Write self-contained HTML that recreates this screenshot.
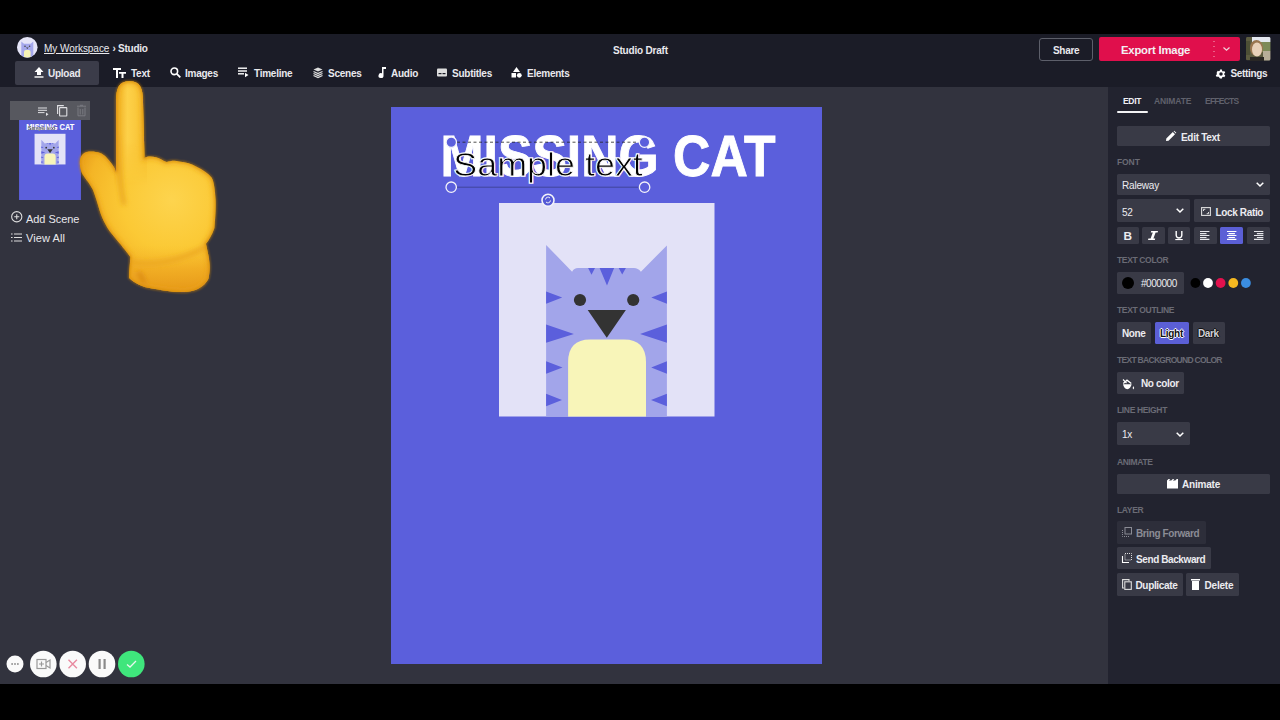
<!DOCTYPE html>
<html><head><meta charset="utf-8">
<style>
*{box-sizing:border-box;margin:0;padding:0}
html,body{width:1280px;height:720px;overflow:hidden;background:#000;font-family:"Liberation Sans",sans-serif;color:#fff}
.a{position:absolute}
#hdr{position:absolute;left:0;top:34px;width:1280px;height:53px;background:#1b1c27}
#main{position:absolute;left:0;top:87px;width:1108px;height:597px;background:#32333e}
#rp{position:absolute;left:1108px;top:87px;width:172px;height:597px;background:#22232f}
.t{position:absolute;white-space:nowrap;line-height:1}
.nav{font-size:10px;font-weight:bold;color:#e9e9ee;letter-spacing:-0.25px}
.btn{position:absolute;background:#393a46;border-radius:1.5px}
.lbl{position:absolute;font-size:8.5px;font-weight:bold;color:#6a6b75;white-space:nowrap;line-height:1;letter-spacing:-0.1px}
.bt{position:absolute;font-size:10px;font-weight:bold;color:#ececf0;white-space:nowrap;line-height:1;letter-spacing:-0.2px}
svg{position:absolute;overflow:visible}
</style></head><body>
<div id="hdr"></div>
<div id="main"></div>
<div id="rp"></div>

<!-- header row 1 -->
<svg style="left:16.7px;top:36.8px" width="20.6" height="20.6" viewBox="0 0 20.6 20.6"><defs><clipPath id="avc"><circle cx="10.3" cy="10.3" r="10.3"/></clipPath></defs>
  <circle cx="10.3" cy="10.3" r="10.3" fill="#e6e5f8"/>
  <g clip-path="url(#avc)">
  <path d="M4.3 4.5 L7 6.8 L13.6 6.8 L16.3 4.5 L16.3 21 L4.3 21 Z" fill="#a5a8ec"/>
  <circle cx="8" cy="9.3" r="0.8" fill="#444"/><circle cx="12.6" cy="9.3" r="0.8" fill="#444"/>
  <path d="M9 10.5 H11.6 L10.3 12Z" fill="#444"/>
  <path d="M7 21 V15 Q7 13 9 13 H11.6 Q13.6 13 13.6 15 V21Z" fill="#f6f3b6"/>
  </g>
</svg>
<div class="t nav" style="left:44px;top:43.5px;font-weight:normal;text-decoration:underline;font-size:10px;letter-spacing:-0.05px">My Workspace</div>
<div class="t nav" style="left:112.5px;top:43.5px">› Studio</div>
<div class="t nav" style="left:613px;top:45.5px;letter-spacing:-0.2px">Studio Draft</div>

<div class="a" style="left:1039px;top:38px;width:54px;height:23px;border:1px solid #5d5f6a;border-radius:3px"></div>
<div class="t nav" style="left:1053px;top:46px;font-size:10px;letter-spacing:-0.3px">Share</div>
<div class="a" style="left:1099px;top:37px;width:141px;height:24px;background:#e00f4c;border-radius:2px"></div>
<svg style="left:1213px;top:40px" width="2" height="20" viewBox="0 0 2 20"><path d="M1 1 V20" stroke="#f5b0c2" stroke-width="1" stroke-dasharray="1 4"/></svg>
<div class="t" style="left:1121px;top:44.5px;font-size:11.3px;font-weight:bold;color:#f3f0f3;letter-spacing:-0.2px">Export Image</div>
<svg style="left:1223px;top:47px" width="7" height="4" viewBox="0 0 7 4"><path d="M0.5 0.5 L3.5 3.3 L6.5 0.5" stroke="#f2d0da" stroke-width="1.2" fill="none"/></svg>
<svg style="left:1245.8px;top:36.8px" width="24.4" height="23.4" viewBox="0 0 24.4 23.4"><defs><filter id="pb"><feGaussianBlur stdDeviation="0.7"/></filter><clipPath id="pc"><rect x="0" y="0" width="24.4" height="23.4" rx="1.5"/></clipPath></defs>
<g clip-path="url(#pc)"><rect x="0" y="0" width="24.4" height="23.4" fill="#5d5c40"/><g filter="url(#pb)">
<rect x="6" y="-2" width="20" height="7" fill="#e4e8f0"/>
<rect x="15" y="5" width="11" height="10" fill="#7d8a58"/>
<rect x="-2" y="4" width="6" height="14" fill="#4e5035"/>
<rect x="17" y="14" width="8" height="10" fill="#b8ae98"/>
<ellipse cx="10.5" cy="11" rx="6.5" ry="8" fill="#9a7650"/>
<ellipse cx="11" cy="12.5" rx="5" ry="7" fill="#e8d0b8"/>
<rect x="4" y="20" width="14" height="6" fill="#2c2622"/>
</g></g></svg>

<!-- header row 2 -->
<div class="a" style="left:15px;top:61px;width:84px;height:24px;background:#3b3c49;border-radius:2px"></div>
<svg style="left:34px;top:67px" width="10" height="11" viewBox="0 0 10 11"><path d="M5 0 L9.5 5 L7 5 L7 8 L3 8 L3 5 L0.5 5 Z" fill="#fff"/><rect x="0.5" y="9.3" width="9" height="1.4" fill="#fff"/></svg>
<div class="t nav" style="left:48px;top:69px">Upload</div>

<svg style="left:113px;top:68px" width="13" height="10" viewBox="0 0 13 10"><path d="M0 0 H8 V2 H5 V10 H3 V2 H0 Z M6 4 H13 V5.8 H10.5 V10 H8.5 V5.8 H6 Z" fill="#fff"/></svg>
<div class="t nav" style="left:131px;top:69px">Text</div>

<svg style="left:170px;top:67px" width="11" height="11" viewBox="0 0 11 11"><circle cx="4.3" cy="4.3" r="3.3" stroke="#fff" stroke-width="1.6" fill="none"/><path d="M6.8 6.8 L10.3 10.3" stroke="#fff" stroke-width="1.8"/></svg>
<div class="t nav" style="left:185px;top:69px">Images</div>

<svg style="left:238px;top:67px" width="11" height="11" viewBox="0 0 11 11"><rect x="0" y="0.5" width="9" height="1.4" fill="#fff"/><rect x="0" y="3.3" width="9" height="1.4" fill="#fff"/><rect x="0" y="6.1" width="6" height="1.4" fill="#fff"/><path d="M7 5.8 L10.5 8 L7 10.2Z" fill="#fff"/></svg>
<div class="t nav" style="left:254px;top:69px">Timeline</div>

<svg style="left:313px;top:67px" width="10" height="11" viewBox="0 0 10 11"><path d="M5 0.5 L9.5 2.5 L5 4.5 L0.5 2.5Z" fill="#ddd"/><path d="M0.5 4.5 L5 6.5 L9.5 4.5 M0.5 6.5 L5 8.5 L9.5 6.5 M0.5 8.5 L5 10.5 L9.5 8.5" stroke="#ddd" stroke-width="1.3" fill="none"/></svg>
<div class="t nav" style="left:328px;top:69px">Scenes</div>

<svg style="left:378px;top:67px" width="8" height="11" viewBox="0 0 8 11"><path d="M4 0 H8 V2 H5.5 V8.5 A2.5 2.5 0 1 1 4 6.3 Z" fill="#fff"/></svg>
<div class="t nav" style="left:391px;top:69px">Audio</div>

<svg style="left:437px;top:68px" width="10" height="9" viewBox="0 0 10 9"><rect x="0" y="0.5" width="10" height="8" rx="1" fill="#ddd"/><rect x="1.5" y="5" width="3" height="1.2" fill="#1b1c27"/><rect x="5.5" y="5" width="3" height="1.2" fill="#1b1c27"/></svg>
<div class="t nav" style="left:452px;top:69px">Subtitles</div>

<svg style="left:511px;top:67px" width="11" height="11" viewBox="0 0 11 11"><path d="M5.5 0 L9 5 L2 5Z" fill="#fff"/><rect x="0.5" y="6" width="4.5" height="4.5" fill="#fff"/><circle cx="8.3" cy="8.3" r="2.4" fill="#fff"/></svg>
<div class="t nav" style="left:527px;top:69px">Elements</div>

<svg style="left:1214.5px;top:67.5px" width="12" height="12" viewBox="0 0 24 24"><path fill="#fff" d="M19.4 13a7.5 7.5 0 0 0 0-2l2.1-1.6-2-3.5-2.5 1a7.6 7.6 0 0 0-1.7-1L15 3h-4l-.4 2.6a7.6 7.6 0 0 0-1.7 1l-2.5-1-2 3.5L4.6 11a7.5 7.5 0 0 0 0 2l-2.1 1.6 2 3.5 2.5-1a7.6 7.6 0 0 0 1.7 1L11 21h4l.4-2.6a7.6 7.6 0 0 0 1.7-1l2.5 1 2-3.5zM13 15.5a3.5 3.5 0 1 1 0-7 3.5 3.5 0 0 1 0 7z" transform="translate(-1 0)"/></svg>
<div class="t nav" style="left:1230.5px;top:69px;letter-spacing:-0.35px">Settings</div>

<!-- scene panel -->
<div class="a" style="left:10px;top:101px;width:80px;height:19px;background:#57585f"></div>
<svg style="left:38px;top:106.5px" width="11" height="10" viewBox="0 0 11 10"><rect x="0" y="0.5" width="9" height="1" fill="#e0e0e4"/><rect x="0" y="2.8" width="9" height="1" fill="#e0e0e4"/><rect x="0" y="5.1" width="6.5" height="1" fill="#e0e0e4"/><path d="M8 5.5 L10.5 7.3 L8 9.1Z" fill="#e0e0e4"/></svg>
<svg style="left:57px;top:105px" width="11" height="12" viewBox="0 0 11 12"><path d="M0.6 9 V0.6 H6.8" stroke="#e0e0e4" stroke-width="1.1" fill="none"/><rect x="2.6" y="2.6" width="7.2" height="8.4" rx="0.5" stroke="#e0e0e4" stroke-width="1.1" fill="none"/></svg>
<svg style="left:76.5px;top:105px" width="9" height="12" viewBox="0 0 9 12"><path d="M0 1.2 H9 M3 0.3 H6 M1 2.5 V10.8 H8 V2.5 M3.2 4 V9.5 M5.8 4 V9.5" stroke="#7a7b82" stroke-width="1" fill="none"/></svg>

<svg style="left:19px;top:120px" width="62" height="80" viewBox="391 107 431 557"><use href="#cv"/></svg>

<svg style="left:10.8px;top:210.8px" width="11.5" height="11.5" viewBox="0 0 11.5 11.5"><circle cx="5.75" cy="5.75" r="5.1" stroke="#ddd" stroke-width="1.1" fill="none"/><path d="M5.75 3.2 V8.3 M3.2 5.75 H8.3" stroke="#ddd" stroke-width="1.1"/></svg>
<div class="t" style="left:26px;top:214px;font-size:11px;color:#e8e8ec;letter-spacing:-0.05px">Add Scene</div>
<svg style="left:11px;top:233px" width="11" height="9" viewBox="0 0 11 9"><path d="M0 1 H1.6 M0 4.5 H1.6 M0 8 H1.6 M3 1 H11 M3 4.5 H11 M3 8 H11" stroke="#ddd" stroke-width="1.2"/></svg>
<div class="t" style="left:26px;top:233px;font-size:11px;color:#e8e8ec;letter-spacing:0.1px">View All</div>

<!-- canvas -->
<svg style="left:391px;top:107px" width="431" height="557" viewBox="391 107 431 557">
<defs><g id="cv">
  <rect x="391" y="107" width="431" height="557" fill="#5b5fdc"/>
  <text x="440.5" y="176.2" font-family="Liberation Sans" font-weight="bold" font-size="57.5" fill="#fff" stroke="#fff" stroke-width="0.9" textLength="335" lengthAdjust="spacingAndGlyphs">MISSING CAT</text>
  <rect x="499" y="203" width="215.5" height="213.5" fill="#e3e2f7"/>
  <path d="M546.1 244.9 L572.1 271.7 Q574 268 578 268 L634 268 Q638 268 640.9 271.7 L666.9 245.4 L666.9 416.5 L546.1 416.5 Z" fill="#a2a5ea"/>
  <path d="M588.1 268 L595 268 L591.5 274.7Z M599.6 268 L614.1 268 L607 285.4Z M618.7 268 L625.9 268 L622.2 274.5Z" fill="#5b5fdc"/>
  <path d="M546.1 291.5 L562.2 297.5 L546.1 303.8Z M546.1 324.4 L573.9 334 L546.1 342.7Z M546.1 361.2 L562.5 367.5 L546.1 373.8Z M546.1 393.8 L562 400 L546.1 406.3Z" fill="#5b5fdc"/>
  <path d="M666.9 291.5 L651.3 297.5 L666.9 303.8Z M666.9 324.4 L640.1 334 L666.9 342.7Z M666.9 361.2 L651.2 367.5 L666.9 373.8Z M666.9 393.8 L651 400 L666.9 406.3Z" fill="#5b5fdc"/>
  <circle cx="580" cy="300" r="6.1" fill="#333"/><circle cx="633.2" cy="300" r="6.1" fill="#333"/>
  <path d="M587.7 309.9 L625.9 309.9 L606.8 337.7Z" fill="#333"/>
  <path d="M568.1 416.5 L568.1 362 Q568.1 339.4 590 339.4 L624 339.4 Q646 339.4 646 362 L646 416.5Z" fill="#f8f5b9"/>
  <mask id="smask" maskUnits="userSpaceOnUse" x="391" y="107" width="431" height="557"><text x="453.3" y="175.6" font-family="Liberation Sans" font-size="33" textLength="189.5" lengthAdjust="spacingAndGlyphs" fill="#fff" stroke="#000" stroke-width="0.9">Sample text</text></mask>
  <text x="453.3" y="175.6" font-family="Liberation Sans" font-size="33" textLength="189.5" lengthAdjust="spacingAndGlyphs" fill="#fff" stroke="#fff" stroke-width="1.3">Sample text</text>
  <rect x="440" y="140" width="220" height="55" fill="#000" mask="url(#smask)"/>
</g></defs>
<use href="#cv"/>
<path d="M457 142.2 H638.5" stroke="#222" stroke-width="0.8" stroke-dasharray="3 2.5"/>
<path d="M457 187.2 H638.5" stroke="#3a3c8a" stroke-width="0.8"/>
<g fill="#5b5fdc" stroke="#f4f4fa" stroke-width="1.3">
<circle cx="451.3" cy="142.2" r="5.2"/><circle cx="644.5" cy="142.2" r="5.2"/>
<circle cx="451.2" cy="187.2" r="5.2"/><circle cx="644.6" cy="187.2" r="5.2"/>
<circle cx="548" cy="200.3" r="6" stroke-width="1.6" fill="#5559d6"/>
</g>
<path d="M545.5 199.5 A2.6 2.6 0 0 1 550 198 M550.5 200.5 A2.6 2.6 0 0 1 546 202" stroke="#f4f4fa" stroke-width="1" fill="none"/>
</svg>

<!-- right panel -->
<div class="t" style="left:1123px;top:97px;font-size:8.5px;font-weight:bold;color:#f0f0f3;letter-spacing:-0.3px">EDIT</div>
<div class="t" style="left:1154px;top:97px;font-size:8.5px;font-weight:bold;color:#60616c;letter-spacing:-0.1px">ANIMATE</div>
<div class="t" style="left:1205px;top:97px;font-size:8.5px;font-weight:bold;color:#60616c;letter-spacing:-0.75px">EFFECTS</div>
<div class="a" style="left:1117px;top:110.5px;width:31px;height:2.5px;background:#f3f3f5;border-radius:1px"></div>

<div class="btn" style="left:1117px;top:126px;width:153px;height:20px"></div>
<svg style="left:1166px;top:131px" width="10" height="10" viewBox="0 0 10 10"><path d="M0 10 L0.3 7.5 L6.8 1 L9 3.2 L2.5 9.7Z M7.6 0.2 L8.2 -0.3 L10.3 1.8 L9.8 2.4Z" fill="#fff"/></svg>
<div class="bt" style="left:1181px;top:132.5px;letter-spacing:-0.3px">Edit Text</div>

<div class="lbl" style="left:1117px;top:157.5px">FONT</div>
<div class="btn" style="left:1117px;top:174px;width:153px;height:21px"></div>
<div class="bt" style="left:1122px;top:181px;font-weight:normal;font-size:10px">Raleway</div>
<svg style="left:1256px;top:182px" width="8" height="5" viewBox="0 0 8 5"><path d="M0.7 0.7 L4 4 L7.3 0.7" stroke="#fff" stroke-width="1.5" fill="none"/></svg>

<div class="btn" style="left:1117px;top:199px;width:73px;height:23px"></div>
<div class="bt" style="left:1122px;top:207.5px;font-weight:normal">52</div>
<svg style="left:1176px;top:208px" width="8" height="5" viewBox="0 0 8 5"><path d="M0.7 0.7 L4 4 L7.3 0.7" stroke="#fff" stroke-width="1.5" fill="none"/></svg>
<div class="btn" style="left:1193.5px;top:199px;width:76.5px;height:23px"></div>
<svg style="left:1201px;top:206.5px" width="10" height="9" viewBox="0 0 10 9"><rect x="0.6" y="0.6" width="8.8" height="7.8" stroke="#ddd" stroke-width="1.1" fill="none"/><path d="M2.5 2.3 H4.3 M2.5 2.3 V4 M7.5 6.7 H5.7 M7.5 6.7 V5" stroke="#ddd" stroke-width="1"/></svg>
<div class="bt" style="left:1215.5px;top:207.5px;letter-spacing:-0.35px">Lock Ratio</div>

<div class="btn" style="left:1117px;top:227px;width:21.5px;height:17px"></div>
<div class="bt" style="left:1123.5px;top:230.5px;font-size:11.8px;margin-top:0">B</div>
<div class="btn" style="left:1142px;top:227px;width:22.8px;height:17px"></div>
<svg style="left:1148px;top:231px" width="10" height="9" viewBox="0 0 10 9"><path d="M3.2 0 H10 L9.6 1.6 H7.6 L5.4 7.4 H7.2 L6.8 9 H0 L0.4 7.4 H2.6 L4.8 1.6 H2.8Z" fill="#fff"/></svg>
<div class="btn" style="left:1168px;top:227px;width:21.8px;height:17px"></div>
<svg style="left:1175px;top:231px" width="8" height="9" viewBox="0 0 8 9"><path d="M1.2 0 V4.2 A2.8 2.8 0 0 0 6.8 4.2 V0" stroke="#fff" stroke-width="1.4" fill="none"/><rect x="0.3" y="8" width="7.4" height="1.1" fill="#fff"/></svg>
<div class="btn" style="left:1193.8px;top:227px;width:23px;height:17px"></div>
<svg style="left:1200px;top:231px" width="10" height="9" viewBox="0 0 10 9"><path d="M0 0.5 H9.4 M0 2.6 H6.5 M0 4.5 H9.4 M0 6.5 H6.5 M0 8.4 H9.4" stroke="#e6e6ea" stroke-width="1.1"/></svg>
<div class="btn" style="left:1220px;top:227px;width:23px;height:17px;background:#5b5fd6"></div>
<svg style="left:1227px;top:231px" width="10" height="9" viewBox="0 0 10 9"><path d="M0 0.5 H9.4 M1.5 2.6 H7.9 M0 4.5 H9.4 M1.5 6.5 H7.9 M0 8.4 H9.4" stroke="#fff" stroke-width="1.1"/></svg>
<div class="btn" style="left:1247.3px;top:227px;width:22.7px;height:17px"></div>
<svg style="left:1253.8px;top:231px" width="10" height="9" viewBox="0 0 10 9"><path d="M0 0.5 H9.4 M2.9 2.6 H9.4 M0 4.5 H9.4 M2.9 6.5 H9.4 M0 8.4 H9.4" stroke="#e6e6ea" stroke-width="1.1"/></svg>

<div class="lbl" style="left:1117px;top:255.5px;letter-spacing:-0.35px">TEXT COLOR</div>
<div class="btn" style="left:1117px;top:272px;width:67px;height:22px"></div>
<svg style="left:1121.7px;top:277px" width="12" height="12" viewBox="0 0 12 12"><circle cx="6" cy="6" r="6" fill="#000"/></svg>
<div class="bt" style="left:1141px;top:279px;font-weight:normal;font-size:10px;letter-spacing:-0.45px">#000000</div>
<svg style="left:1190px;top:278px" width="62" height="10" viewBox="0 0 62 10"><circle cx="5.4" cy="5" r="4.9" fill="#000"/><circle cx="18" cy="5" r="4.9" fill="#fff"/><circle cx="30.6" cy="5" r="4.9" fill="#e2114d"/><circle cx="43.3" cy="5" r="4.9" fill="#f5b820"/><circle cx="55.9" cy="5" r="4.9" fill="#3b8de0"/></svg>

<div class="lbl" style="left:1117px;top:305.5px;letter-spacing:-0.35px">TEXT OUTLINE</div>
<div class="btn" style="left:1117px;top:322px;width:34px;height:22px"></div>
<div class="bt" style="left:1122px;top:329px;letter-spacing:-0.4px">None</div>
<div class="btn" style="left:1155px;top:322px;width:34px;height:22px;background:#5b5fd6"></div>
<div class="bt" style="left:1160px;top:329px;color:#111;letter-spacing:-0.3px;text-shadow:1px 0 0 #fff,-1px 0 0 #fff,0 1px 0 #fff,0 -1px 0 #fff">Light</div>
<div class="btn" style="left:1193px;top:322px;width:32px;height:22px"></div>
<div class="bt" style="left:1198px;top:329px;color:#d0d0d6;letter-spacing:-0.4px;text-shadow:1px 0 0 #111,-1px 0 0 #111,0 1px 0 #111,0 -1px 0 #111">Dark</div>

<div class="lbl" style="left:1117px;top:355.5px;letter-spacing:-0.7px">TEXT BACKGROUND COLOR</div>
<div class="btn" style="left:1117px;top:372px;width:67px;height:22px"></div>
<svg style="left:1121.5px;top:378.5px" width="13" height="11" viewBox="0 0 13 11"><path d="M1 5.2 L9.6 5.2 Q8.5 9.8 5.3 10.3 Q2 9.8 1 5.2Z" fill="#fff"/><path d="M1.3 4.6 L5 1.2 L9.3 4.6" stroke="#fff" stroke-width="1.3" fill="none"/><path d="M1 0.5 L4.5 4" stroke="#fff" stroke-width="1.1"/><path d="M11.4 7 Q13 9.3 11.4 10.6 Q9.8 9.3 11.4 7Z" fill="#fff"/></svg>
<div class="bt" style="left:1141px;top:379px;letter-spacing:-0.35px">No color</div>

<div class="lbl" style="left:1117px;top:405.5px;letter-spacing:-0.35px">LINE HEIGHT</div>
<div class="btn" style="left:1117px;top:422px;width:73px;height:23px"></div>
<div class="bt" style="left:1122px;top:430px;font-weight:normal">1x</div>
<svg style="left:1176px;top:431.5px" width="8" height="5" viewBox="0 0 8 5"><path d="M0.7 0.7 L4 4 L7.3 0.7" stroke="#fff" stroke-width="1.5" fill="none"/></svg>

<div class="lbl" style="left:1117px;top:457.5px;letter-spacing:-0.35px">ANIMATE</div>
<div class="btn" style="left:1117px;top:473.5px;width:153px;height:20px"></div>
<svg style="left:1166.5px;top:478.5px" width="11" height="10" viewBox="0 0 11 10"><path d="M0 1.5 L1.5 0 H3.3 L1.8 1.5 H4.3 L5.8 0 H7.3 L5.8 1.5 H8.3 L9.8 0 H11 V9.5 H0Z" fill="#fff"/></svg>
<div class="bt" style="left:1182px;top:479.5px;letter-spacing:-0.2px">Animate</div>

<div class="lbl" style="left:1117px;top:505.5px;letter-spacing:-0.35px">LAYER</div>
<div class="btn" style="left:1117px;top:521px;width:89px;height:23px;background:#2d2e3a"></div>
<svg style="left:1122px;top:527px" width="10" height="10" viewBox="0 0 10 10"><rect x="3" y="0.5" width="6.5" height="6.5" stroke="#8b8c95" stroke-width="1" fill="none"/><path d="M0.5 3 V9.5 H7" stroke="#8b8c95" stroke-width="1" stroke-dasharray="1 1" fill="none"/></svg>
<div class="bt" style="left:1136px;top:528.5px;color:#8b8c95;letter-spacing:-0.4px">Bring Forward</div>
<div class="btn" style="left:1117px;top:547px;width:94px;height:22px"></div>
<svg style="left:1122px;top:553px" width="10" height="10" viewBox="0 0 10 10"><rect x="3" y="0.5" width="6.5" height="6.5" stroke="#ddd" stroke-width="1" stroke-dasharray="1 1" fill="none"/><path d="M0.5 3 V9.5 H7" stroke="#fff" stroke-width="1.1" fill="none"/></svg>
<div class="bt" style="left:1136px;top:554.5px;letter-spacing:-0.4px">Send Backward</div>
<div class="btn" style="left:1117px;top:573px;width:66px;height:23px"></div>
<svg style="left:1122px;top:579px" width="10" height="11" viewBox="0 0 10 11"><path d="M2 9 H0.6 V0.6 H7 V2" stroke="#ddd" stroke-width="1.1" fill="none"/><rect x="2.8" y="2.8" width="6.5" height="7.6" stroke="#ddd" stroke-width="1.1" fill="none"/></svg>
<div class="bt" style="left:1135.5px;top:580.5px;letter-spacing:-0.35px">Duplicate</div>
<div class="btn" style="left:1186px;top:573px;width:53px;height:23px"></div>
<svg style="left:1191px;top:579px" width="9" height="11" viewBox="0 0 9 11"><rect x="0" y="0" width="9" height="1.5" fill="#fff"/><rect x="1" y="2" width="7" height="9" fill="#fff"/></svg>
<div class="bt" style="left:1204.5px;top:580.5px;letter-spacing:-0.2px">Delete</div>

<!-- hand -->
<svg style="left:0;top:0" width="260" height="320" viewBox="0 0 260 320">
<defs>
 <radialGradient id="hg" cx="172" cy="200" r="100" gradientUnits="userSpaceOnUse">
  <stop offset="0" stop-color="#fdd44e"/><stop offset="0.5" stop-color="#fbc935"/><stop offset="0.85" stop-color="#f4b526"/><stop offset="1" stop-color="#e99f1c"/>
 </radialGradient>
 <linearGradient id="fg" x1="116" y1="0" x2="145" y2="0" gradientUnits="userSpaceOnUse">
  <stop offset="0" stop-color="#f0ad20"/><stop offset="0.4" stop-color="#fdd149"/><stop offset="1" stop-color="#f7c030"/>
 </linearGradient>
 <linearGradient id="fm" x1="0" y1="140" x2="0" y2="185" gradientUnits="userSpaceOnUse">
  <stop offset="0" stop-color="#fff"/><stop offset="1" stop-color="#000"/>
 </linearGradient>
 <mask id="fmask"><rect x="0" y="0" width="260" height="320" fill="url(#fm)"/></mask>
 <linearGradient id="wg" x1="0" y1="245" x2="0" y2="292" gradientUnits="userSpaceOnUse">
  <stop offset="0" stop-color="#f6b92a" stop-opacity="0"/><stop offset="0.5" stop-color="#eea41f" stop-opacity="0.6"/><stop offset="1" stop-color="#e39317" stop-opacity="0.85"/>
 </linearGradient>
 <linearGradient id="tg" x1="80" y1="160" x2="120" y2="200" gradientUnits="userSpaceOnUse">
  <stop offset="0" stop-color="#f7bd2c"/><stop offset="1" stop-color="#f7bd2c" stop-opacity="0"/>
 </linearGradient>
 <clipPath id="hc"><path id="hp" d="M116 102 C116 88 119 81.3 129.5 81.3 C140 81.3 143 88 143 102 L144.5 158 C148 156 152 156.5 156 157.3 C160 158 163 161 166.7 162 C170 161 175 160 179 161.5 C186 162 192 164 196 166.5 C203 170 208 173 211.7 177.8 C214 182 215 190 215.6 200 C216 210 215 220 214.4 228 C212 235 209 240 206 243.8 C207 250 209 256 209.4 262.5 C210 268 209.5 274 208.3 279 C204 287 196 291 187.5 291.7 C175 293 162 290 152 288.5 C142 287 134 283 129.2 278 C129 272 130 264 130.3 257 C127 252 121 245 114 236.5 C108 230 102.5 220 99.7 210.8 C97.5 203 95.5 197 93 190 C89 182 83.5 177 81.5 172 C80 167 79.5 164 80 160 C81 154 85 151.5 91 151.5 C98 151.5 103 153.5 106.5 157.5 C110.5 162 113.5 166 115 169 L116 172 Z"/></clipPath>
 <filter id="bl" x="-50%" y="-50%" width="200%" height="200%"><feGaussianBlur stdDeviation="2.5"/></filter>
 <filter id="bl2" x="-50%" y="-50%" width="200%" height="200%"><feGaussianBlur stdDeviation="1"/></filter>
</defs>
<g clip-path="url(#hc)">
 <rect x="70" y="75" width="160" height="230" fill="url(#hg)"/>
 <rect x="114" y="75" width="33" height="120" fill="url(#fg)" mask="url(#fmask)"/>
 <rect x="70" y="240" width="160" height="60" fill="url(#wg)"/>
 <g filter="url(#bl)">
  <path d="M117 135 C118 160 119 180 124 205" stroke="#e8a41c" stroke-width="4" fill="none"/>
  <path d="M131 262 C150 266 180 262 207 246" stroke="#eba622" stroke-width="4" fill="none"/>
  <path d="M138 272 C146 282 146 290 138 294" stroke="#dc8c14" stroke-width="5" fill="none"/>
  <path d="M212 250 C208 265 210 280 205 290" stroke="#e09516" stroke-width="4" fill="none"/>
  <use href="#hp" fill="none" stroke="#eba21d" stroke-width="5" opacity="0.8"/>
 </g>
</g>
<g filter="url(#bl2)"><use href="#hp" fill="none" stroke="#cf840e" stroke-width="1.6" opacity="0.75"/></g>
</svg>
<!-- bottom controls -->
<svg style="left:0;top:648px" width="150" height="32" viewBox="0 0 150 32">
  <circle cx="15" cy="16" r="8.5" fill="#fafafa"/>
  <path d="M11.5 16 h1.2 M14.4 16 h1.2 M17.3 16 h1.2" stroke="#555" stroke-width="1.3"/>
  <circle cx="43.3" cy="16" r="13.3" fill="#fafafa"/>
  <rect x="37" y="11.5" width="9" height="9" stroke="#999" stroke-width="1.2" fill="none"/><path d="M46 14.5 L50 12 V20 L46 17.5" stroke="#999" stroke-width="1.2" fill="none"/><path d="M41.5 13.5 V18.5 M39 16 H44" stroke="#999" stroke-width="1.2"/>
  <circle cx="72.7" cy="16" r="13.3" fill="#fafafa"/>
  <path d="M68.5 11.8 L76.9 20.2 M76.9 11.8 L68.5 20.2" stroke="#e88aa0" stroke-width="1.4"/>
  <circle cx="102" cy="16" r="13.3" fill="#fafafa"/>
  <rect x="98.5" y="11" width="2.2" height="10" fill="#8a8a8a"/><rect x="103.5" y="11" width="2.2" height="10" fill="#8a8a8a"/>
  <circle cx="131.3" cy="16" r="13.3" fill="#3fe67c"/>
  <path d="M127 16.5 L130 19 L136 13" stroke="#e8f8ee" stroke-width="1.3" fill="none"/>
</svg>

</body></html>
